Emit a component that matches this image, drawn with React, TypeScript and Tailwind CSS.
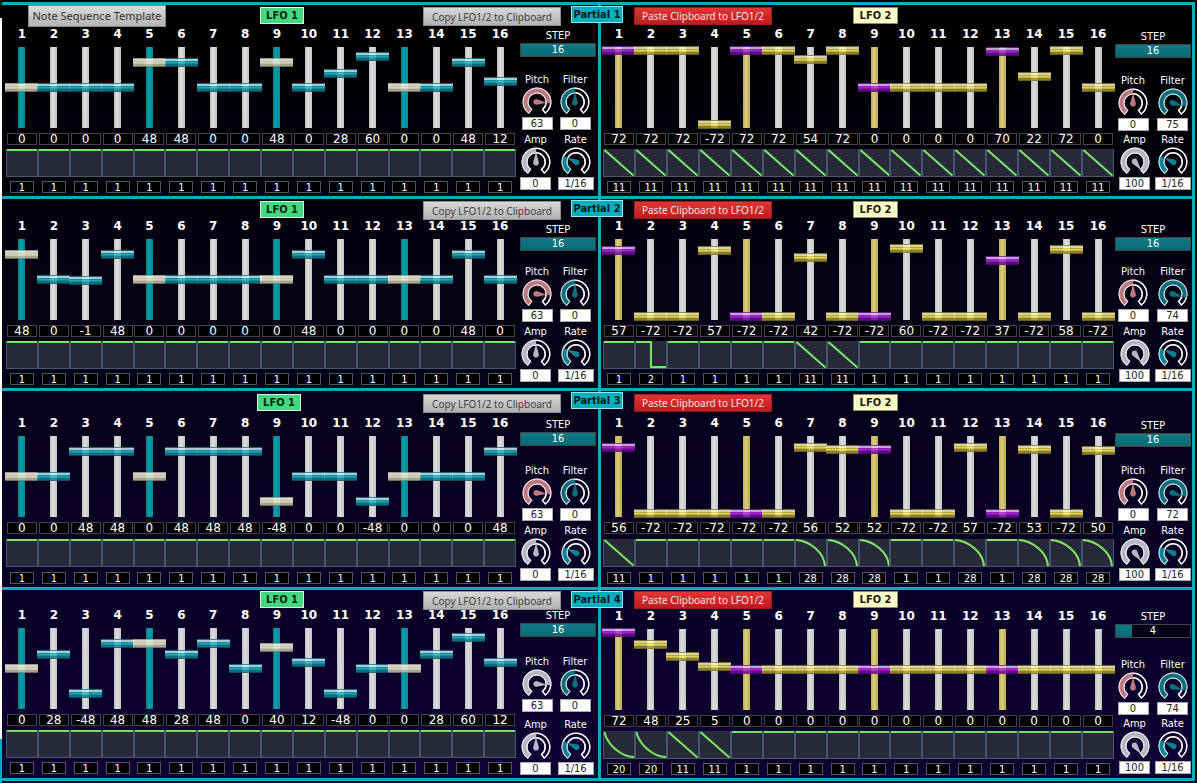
import { useState } from 'react';
import clsx from 'clsx';

type Lfo = {
  name: string;
  values: number[];
  waves: number[];
  steps: number;
  pitch: number;
  pitchAngle: number;
  pitchColor: string;
  filter: number;
  filterAngle: number;
  amp: number;
  ampAngle: number;
  stepsPad: string;
  controlsPad: string;
  knobGap: string;
  ampGap: string;
  waveGap: string;
};

const PINK = '#bb7a80';
const SILVER = '#b8b6c2';
const TEAL = '#0b6f7b';
const BRIGHT_TEAL = '#0b8292';

const flat = (n: number) => Array<number>(16).fill(n);

const left = { name: 'LFO 1', waves: flat(1), steps: 16, pitch: 63, pitchAngle: 94, pitchColor: PINK, filter: 0, filterAngle: 0, amp: 0, ampAngle: 0 };
const right = { name: 'LFO 2', steps: 16, pitch: 0, pitchAngle: 0, pitchColor: PINK, filterAngle: 106, amp: 100, ampAngle: 143 };

const partials: { id: number; header: string; lfo1: Lfo; lfo2: Lfo }[] = [
  {
    id: 1,
    header: 'pt-0.5',
    lfo1: {
      ...left,
      values: [0, 0, 0, 0, 48, 48, 0, 0, 48, 0, 28, 60, 0, 0, 48, 12],
      stepsPad: 'pt-1', controlsPad: 'pt-[7px]', knobGap: 'mt-[15px]', ampGap: 'mt-0.5', waveGap: 'mt-1',
    },
    lfo2: {
      ...right,
      values: [72, 72, 72, -72, 72, 72, 54, 72, 0, 0, 0, 0, 70, 22, 72, 0],
      waves: flat(11),
      filter: 75,
      stepsPad: 'pt-1', controlsPad: 'pt-2', knobGap: 'mt-[15px]', ampGap: 'mt-px', waveGap: 'mt-1',
    },
  },
  {
    id: 2,
    header: 'pt-0.5',
    lfo1: {
      ...left,
      values: [48, 0, -1, 48, 0, 0, 0, 0, 0, 48, 0, 0, 0, 0, 48, 0],
      stepsPad: 'pt-0.5', controlsPad: 'pt-[7px]', knobGap: 'mt-[13px]', ampGap: 'mt-0.5', waveGap: 'mt-1',
    },
    lfo2: {
      ...right,
      values: [57, -72, -72, 57, -72, -72, 42, -72, -72, 60, -72, -72, 37, -72, 58, -72],
      waves: [1, 2, 1, 1, 1, 1, 11, 11, 1, 1, 1, 1, 1, 1, 1, 1],
      filter: 74,
      stepsPad: 'pt-0.5', controlsPad: 'pt-[7px]', knobGap: 'mt-[13px]', ampGap: 'mt-0.5', waveGap: 'mt-1',
    },
  },
  {
    id: 3,
    header: 'pt-[3px]',
    lfo1: {
      ...left,
      values: [0, 0, 48, 48, 0, 48, 48, 48, -48, 0, 0, -48, 0, 0, 0, 48],
      stepsPad: 'pt-[7px]', controlsPad: 'pt-2.5', knobGap: 'mt-[17px]', ampGap: 'mt-0.5', waveGap: 'mt-[5px]',
    },
    lfo2: {
      ...right,
      values: [56, -72, -72, -72, -72, -72, 56, 52, 52, -72, -72, 57, -72, 53, -72, 50],
      waves: [11, 1, 1, 1, 1, 1, 28, 28, 28, 1, 1, 28, 1, 28, 28, 28],
      filter: 72,
      stepsPad: 'pt-[7px]', controlsPad: 'pt-[11px]', knobGap: 'mt-[16px]', ampGap: 'mt-0.5', waveGap: 'mt-[5px]',
    },
  },
  {
    id: 4,
    header: 'pt-px',
    lfo1: {
      ...left,
      values: [0, 28, -48, 48, 48, 28, 48, 0, 40, 12, -48, 0, 0, 28, 60, 12],
      pitchColor: SILVER,
      stepsPad: 'pt-0', controlsPad: 'pt-0.5', knobGap: 'mt-[17px]', ampGap: 'mt-[5px]', waveGap: 'mt-1',
    },
    lfo2: {
      ...right,
      values: [72, 48, 25, 5, 0, 0, 0, 0, 0, 0, 0, 0, 0, 0, 0, 0],
      waves: [20, 20, 11, 11, 1, 1, 1, 1, 1, 1, 1, 1, 1, 1, 1, 1],
      steps: 4,
      filter: 74,
      stepsPad: 'pt-px', controlsPad: 'pt-[3px]', knobGap: 'mt-[19px]', ampGap: 'mt-px', waveGap: 'mt-1',
    },
  },
];

const wavePaths: Record<number, string> = {
  1: 'M0 1H32',
  2: 'M0 1H16V27H32',
  11: 'M0.5 1L31.5 27.5',
  20: 'M0.5 1C3 14 18 26.5 32 27',
  28: 'M0 1C15 2 30 14 31 28',
};

const thumbColors = {
  cream: '[&::-webkit-slider-thumb]:bg-[linear-gradient(#b4b298_0_1px,#faf8ec_1px_3px,#e6e2c6_3px_4px,#fffad4_4px_5px,#e8e4c8_5px_6px,#c2bea2_6px_8px,#85836c_8px)]',
  teal: '[&::-webkit-slider-thumb]:bg-[linear-gradient(#1b7f88_0_1px,#c8ecf0_1px_3px,#17a2b0_3px_4px,#26c0d0_4px_5px,#12a6b4_5px_6px,#0c7e8a_6px_8px,#0b5964_8px)]',
  purple: '[&::-webkit-slider-thumb]:bg-[linear-gradient(#7a20a4_0_1px,#e4c0f4_1px_3px,#a428d8_3px_4px,#b030e8_4px_5px,#981cc8_5px_6px,#700a9c_6px_8px,#540c78_8px)]',
  yellow: '[&::-webkit-slider-thumb]:bg-[linear-gradient(#8a8230_0_1px,#f8f4cc_1px_3px,#d4c840_3px_4px,#fff468_4px_5px,#e0d248_5px_6px,#a09434_6px_8px,#7c7224_8px)]',
};

const trackColors = {
  gray: 'bg-[linear-gradient(90deg,#bdbdbd,#dedede_40%,#c4c4c4)]',
  teal: 'bg-[linear-gradient(90deg,#007f88,#00a0aa_40%,#008a94)]',
  yellow: 'bg-[linear-gradient(90deg,#b8ac5c,#dcd078_40%,#b8ac5c)]',
};

function Step({ lfo, index }: { lfo: Lfo; index: number }) {
  const [value, setValue] = useState(lfo.values[index]);
  const first = lfo.name === 'LFO 1';
  const accent = index % 4 === 0;
  const thumb = first ? (accent ? 'cream' : 'teal') : accent ? 'purple' : 'yellow';
  const track = !accent ? 'gray' : first ? 'teal' : 'yellow';
  const wave = lfo.waves[index];

  return (
    <div className="flex w-0 min-w-0 flex-1 flex-col items-center font-['DejaVu_Sans',sans-serif]">
      <span className="h-4 text-xs leading-4 font-bold">{index + 1}</span>
      <input
        type="range"
        min={-72}
        max={72}
        value={value}
        onChange={(e) => setValue(Number(e.target.value))}
        aria-label={`${lfo.name} step ${index + 1} level`}
        className={clsx(
          'mt-1 h-[83px] w-[33px] shrink-0 appearance-none bg-[length:7px_81px] bg-center bg-no-repeat [direction:rtl] [writing-mode:vertical-lr]',
          '[&::-webkit-slider-thumb]:h-[9px] [&::-webkit-slider-thumb]:w-[33px] [&::-webkit-slider-thumb]:appearance-none [&::-webkit-slider-thumb]:opacity-85',
          trackColors[track],
          thumbColors[thumb],
        )}
      />
      <input
        type="text"
        value={value}
        onChange={(e) => setValue(Number(e.target.value) || 0)}
        aria-label={`${lfo.name} step ${index + 1} value`}
        className="mt-1 h-3 w-[30px] border border-[#444444] bg-black text-center text-xs leading-none"
      />
      <svg
        viewBox="0 0 32 28"
        preserveAspectRatio="none"
        className={clsx('h-7 w-full border border-t-0 border-[#425a6c] bg-[#282a3c]', lfo.waveGap)}
      >
        <path d={wavePaths[wave]} fill="none" stroke="#7ae860" strokeWidth="2" vectorEffect="non-scaling-stroke" />
      </svg>
      <input
        type="text"
        defaultValue={wave}
        aria-label={`${lfo.name} step ${index + 1} wave`}
        className={clsx(
          "h-3 w-6 border border-[#555555] bg-black text-center font-['DejaVu_Sans_Condensed','DejaVu_Sans',sans-serif] text-[11px] leading-none",
          lfo.waveGap,
        )}
      />
    </div>
  );
}

function point(angle: number, r: number) {
  const a = (angle * Math.PI) / 180;
  return `${(r * Math.sin(a)).toFixed(2)} ${(-r * Math.cos(a)).toFixed(2)}`;
}

function ring(from: number, to: number) {
  const large = to - from > 180 ? 1 : 0;
  return `M${point(from, 13.8)}A13.8 13.8 0 ${large} 1 ${point(to, 13.8)}L${point(to, 9.2)}A9.2 9.2 0 ${large} 0 ${point(from, 9.2)}Z`;
}

function Knob({ label, value, angle, color, wide }: { label: string; value: string | number; angle: number; color: string; wide?: boolean }) {
  return (
    <label className="flex flex-col items-center">
      <span className="h-3.5 text-[11px] leading-4">{label}</span>
      <svg viewBox="-16 -16 32 31" className="h-[31px] w-8">
        <path d={ring(-143, 143)} fill="none" stroke="#ffffff" strokeWidth="1.5" />
        <path d={ring(-143, angle)} fill={color} stroke={color} strokeWidth="0.5" />
        <path d={ring(-143, 143)} fill="none" stroke="#ffffff" strokeOpacity="0.6" strokeWidth="1" />
        <path d="M0 -10L2.8 0A2.9 2.9 0 1 1 -2.8 0Z" fill={color} transform={`rotate(${angle})`} />
      </svg>
      <input
        type="text"
        defaultValue={value}
        className={clsx(
          'h-[13px] border border-[#a8a8a8] bg-white text-center text-[11px] leading-none text-[#222222]',
          wide ? 'w-9' : 'w-[31px]',
        )}
      />
    </label>
  );
}

function Controls({ lfo }: { lfo: Lfo }) {
  const [steps, setSteps] = useState(lfo.steps);
  const first = lfo.name === 'LFO 1';
  const fill = steps === 16 ? 100 : ((steps - 1) / 14) * 100;

  return (
    <div className={clsx('w-[76px] shrink-0', lfo.controlsPad)}>
      <label className="block text-center text-[11px] leading-3.5">
        STEP
        <span className="grid h-3.5 border border-[#444444] bg-black/40">
          <span className="col-start-1 row-start-1 bg-[linear-gradient(#127a84,#046a74)]" style={{ width: `${fill}%` }} />
          <input
            type="range"
            min={1}
            max={16}
            value={steps}
            onChange={(e) => setSteps(Number(e.target.value))}
            className="col-start-1 row-start-1 h-3 w-full opacity-0"
          />
          <span className="pointer-events-none col-start-1 row-start-1 text-[11px] leading-3">{steps}</span>
        </span>
      </label>
      <div className={clsx('grid justify-items-center', lfo.knobGap, first ? 'grid-cols-[34px_1fr]' : 'grid-cols-[36px_1fr] gap-x-[3px]')}>
        <Knob label="Pitch" value={lfo.pitch} angle={lfo.pitchAngle} color={lfo.pitchColor} />
        <Knob label="Filter" value={lfo.filter} angle={lfo.filterAngle} color={TEAL} />
      </div>
      <div className={clsx('grid justify-items-center', lfo.ampGap, first ? 'grid-cols-[31px_1fr] gap-x-1' : 'grid-cols-[39px_1fr]')}>
        <Knob label="Amp" value={lfo.amp} angle={lfo.ampAngle} color={SILVER} />
        <Knob label="Rate" value="1/16" angle={-65} color={BRIGHT_TEAL} wide />
      </div>
    </div>
  );
}

function LfoPanel({ lfo }: { lfo: Lfo }) {
  const first = lfo.name === 'LFO 1';
  return (
    <div className={clsx('flex', first ? 'gap-1 pr-0.5 pl-1' : 'gap-px pr-px pl-0.5')}>
      <div className={clsx('flex min-w-0 flex-1', lfo.stepsPad)}>
        {lfo.values.map((_, i) => (
          <Step key={i} lfo={lfo} index={i} />
        ))}
      </div>
      <Controls lfo={lfo} />
    </div>
  );
}

export default function App() {
  return (
    <div className="flex bg-[linear-gradient(#000000,#0e0034)] font-['DejaVu_Sans_Condensed','DejaVu_Sans',sans-serif] text-white">
      {/* Window edge */}
      <div className="flex w-0.5 shrink-0 flex-col">
        <div className="h-[18px] bg-black" />
        <div className="flex-1 bg-white" />
        <div className="h-11 bg-[#00aebe]" />
      </div>

      <main className="my-0.5 min-w-0 flex-1 border-r-[3px] border-b-[3px] border-[#00aebe]">
        {partials.map((p) => (
          <section key={p.id} className="relative grid grid-cols-[minmax(0,599fr)_minmax(0,591fr)] border-t-[3px] border-[#00aebe]">
            <div className="border-r-[3px] border-[#00aebe] pb-[3px]">
              <header
                className={clsx(
                  "relative z-10 grid h-[17px] items-start justify-items-start font-['Noto_Sans',sans-serif]",
                  p.header,
                  p.id === 3 ? 'grid-cols-[255fr_166fr_175fr]' : 'grid-cols-[258fr_163fr_175fr]',
                )}
              >
                <div className="pl-[26px]">
                  {p.id === 1 && (
                    <button className="-mt-0.5 block h-[22px] w-[138px] border border-[#888888] bg-[linear-gradient(#dcdcdc,#b4b4b4)] text-[11px] leading-5 whitespace-nowrap text-[#303030]">
                      Note Sequence Template
                    </button>
                  )}
                </div>
                <h2 className="h-[17px] w-11 border border-[#d8f8e0] bg-[#45d880] text-center font-['DejaVu_Sans_Condensed','DejaVu_Sans',sans-serif] text-[11px] leading-4 font-bold text-[#06280f]">
                  LFO 1
                </h2>
                <button className="h-[19px] w-[138px] border border-[#909090] bg-[linear-gradient(#d8d8d8,#b2b2b2)] text-[10px] leading-4 whitespace-nowrap text-[#404040]">
                  Copy LFO1/2 to Clipboard
                </button>
              </header>
              <LfoPanel lfo={p.lfo1} />
            </div>

            <div className="pb-[3px]">
              <header
                className={clsx(
                  "relative z-10 grid h-[17px] grid-cols-[219fr_339fr] items-start justify-items-start pl-[33px] font-['Noto_Sans',sans-serif]",
                  p.header,
                )}
              >
                <button className="h-[18px] w-[138px] border border-[#a01820] bg-[linear-gradient(#e23434,#bc1c20)] text-[10px] leading-4 whitespace-nowrap text-[#f8e0e0]">
                  Paste Clipboard to LFO1/2
                </button>
                <h2 className="h-[17px] w-[45px] border border-[#8c8a70] bg-[#ffffc8] text-center font-['DejaVu_Sans_Condensed','DejaVu_Sans',sans-serif] text-[11px] leading-4 font-bold text-[#1c1c10]">
                  LFO 2
                </h2>
              </header>
              <LfoPanel lfo={p.lfo2} />
            </div>

            {/* Badge straddling the divider */}
            <h1 className="absolute top-px left-1/2 z-20 h-[17px] w-[52px] -translate-x-1/2 border border-[#9be4ec] bg-[#00aebe] text-center text-[11px] leading-[15px] font-bold whitespace-nowrap text-[#00181c]">
              Partial {p.id}
            </h1>
          </section>
        ))}
      </main>
      <div className="w-0.5 shrink-0 bg-black" />
    </div>
  );
}
